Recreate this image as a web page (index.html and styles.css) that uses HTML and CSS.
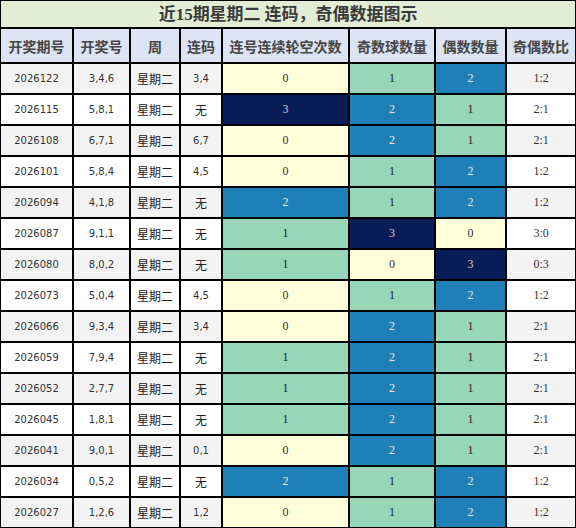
FILE: index.html
```html
<!DOCTYPE html>
<html lang="zh-CN">
<head>
<meta charset="UTF-8">
<meta name="viewport" content="width=device-width, initial-scale=1.0">
<title>连码奇偶图示</title>
<link rel="stylesheet" href="styles.css">
</head>
<body>
    <table class="chart">
        <colgroup>
            <col class="c_issue">
            <col class="c_nums">
            <col class="c_week">
            <col class="c_pair">
            <col class="c_gap">
            <col class="c_odd">
            <col class="c_even">
            <col class="c_ratio">
        </colgroup>
        <thead>
            <tr class="title_row">
                <th colspan="8"><span class="num">近<b>15</b>期星期二</span> 连码，奇偶数据图示</th>
            </tr>
            <tr class="head_row">
                <th>开奖期号</th>
                <th>开奖号</th>
                <th>周</th>
                <th>连码</th>
                <th>连号连续轮空次数</th>
                <th>奇数球数量</th>
                <th>偶数数量</th>
                <th>奇偶数比</th>
            </tr>
        </thead>
        <tbody id="chart_body"></tbody>
    </table>

<script>
    var rows = [
        ['2026122', '3,4,6', '3,4', 0, 1, 2],
        ['2026115', '5,8,1', '无', 3, 2, 1],
        ['2026108', '6,7,1', '6,7', 0, 2, 1],
        ['2026101', '5,8,4', '4,5', 0, 1, 2],
        ['2026094', '4,1,8', '无', 2, 1, 2],
        ['2026087', '9,1,1', '无', 1, 3, 0],
        ['2026080', '8,0,2', '无', 1, 0, 3],
        ['2026073', '5,0,4', '4,5', 0, 1, 2],
        ['2026066', '9,3,4', '3,4', 0, 2, 1],
        ['2026059', '7,9,4', '无', 1, 2, 1],
        ['2026052', '2,7,7', '无', 1, 2, 1],
        ['2026045', '1,8,1', '无', 1, 2, 1],
        ['2026041', '9,0,1', '0,1', 0, 2, 1],
        ['2026034', '0,5,2', '无', 2, 1, 2],
        ['2026027', '1,2,6', '1,2', 0, 1, 2]
    ];
    var body = document.querySelector('#chart_body');

    // heat cell: colour by value 0-3
    function heat(val) {
        return '<td class="heat lv' + val + '">' + val + '</td>';
    }

    var html = '';
    rows.forEach(function(r) {
        html += `
            <tr>
                <td class="plain">${r[0]}</td>
                <td class="plain">${r[1]}</td>
                <td class="cjk">星期二</td>
                <td class="${r[2] === '无' ? 'cjk' : 'plain'}">${r[2]}</td>
                ${heat(r[3])}
                ${heat(r[4])}
                ${heat(r[5])}
                <td class="ratio">${r[4]}:${r[5]}</td>
            </tr>`;
    });
    body.innerHTML = html;
</script>
</body>
</html>
```

FILE: styles.css
```css
*,
*::before,
*::after {
  box-sizing: border-box;
}
body {
    margin: 0;
    font-family: "Noto Sans CJK SC", sans-serif;
}

.chart {
    width: 576px;
    table-layout: fixed;
    border-collapse: separate;
    border-spacing: 0;
}
.c_issue { width: 73px; }
.c_nums  { width: 57px; }
.c_week  { width: 50px; }
.c_pair  { width: 42px; }
.c_gap   { width: 127px; }
.c_odd   { width: 86px; }
.c_even  { width: 71px; }
.c_ratio { width: 70px; }

.chart th,
.chart td {
    border: 1px solid #000;
    text-align: center;
    padding: 0;
    overflow: hidden;
    white-space: nowrap;
}

.title_row th {
    height: 27px;
    background: #e3edd5;
    color: #3a3a3a;
    font-size: 17px;
    font-weight: bold;
    line-height: 24px;
}
.title_row b {
    font-family: "Liberation Serif", serif;
}
.head_row th {
    height: 35px;
    background: #dce3f3;
    color: #454545;
    font-size: 14px;
    font-weight: bold;
}

.chart tbody tr {
    background: #fff;
}
.chart tbody tr:nth-child(odd) {
    background: #f3f3f3;
}
.chart tbody td {
    height: 31px;
    color: #222;
}
.chart tbody td.plain {
    font-family: "DejaVu Sans", sans-serif;
    font-size: 10px;
    color: #333;
}
.chart tbody td.cjk {
    font-size: 12px;
}
.chart tbody td.ratio {
    font-family: "Liberation Serif", serif;
    font-size: 12px;
    color: #333;
}

.chart tbody td.heat {
    font-family: "Liberation Serif", serif;
    font-size: 12px;
}
.chart tbody td.lv0 {
    background: #ffffd9;
    color: #333;
}
.chart tbody td.lv1 {
    background: #98d6b9;
    color: #222;
}
.chart tbody td.lv2 {
    background: #1f80b8;
    color: #e8e8e8;
}
.chart tbody td.lv3 {
    background: #081d58;
    color: #d0d0d0;
}
```
